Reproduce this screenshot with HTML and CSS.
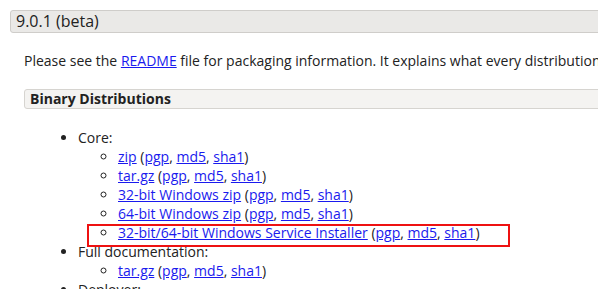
FILE: index.html
```html
<!DOCTYPE html>
<html lang="en">
<head>
  <meta charset="UTF-8" />
  <title>Apache Tomcat 9 Downloads</title>
  <link rel="stylesheet" href="styles.css">
</head>
<body>
  <div class="section">
    <h3 class="section-title">9.0.1 (beta)</h3>
    <div class="section-body">
      <p>Please see the <a href="#">README</a> file for packaging information. It explains what every distribution contains.</p>

      <h4 class="sub-title">Binary Distributions</h4>
      <ul class="dist-list">
        <li>Core:
          <ul>
            <li><a href="#">zip</a> (<a href="#">pgp</a>, <a href="#">md5</a>, <a href="#">sha1</a>)</li>
            <li><a href="#">tar.gz</a> (<a href="#">pgp</a>, <a href="#">md5</a>, <a href="#">sha1</a>)</li>
            <li><a href="#">32-bit Windows zip</a> (<a href="#">pgp</a>, <a href="#">md5</a>, <a href="#">sha1</a>)</li>
            <li><a href="#">64-bit Windows zip</a> (<a href="#">pgp</a>, <a href="#">md5</a>, <a href="#">sha1</a>)</li>
            <li class="marked"><a href="#">32-bit/64-bit Windows Service Installer</a> (<a href="#">pgp</a>, <a href="#">md5</a>, <a href="#">sha1</a>)<span class="highlight"></span></li>
          </ul>
        </li>
        <li>Full documentation:
          <ul>
            <li><a href="#">tar.gz</a> (<a href="#">pgp</a>, <a href="#">md5</a>, <a href="#">sha1</a>)</li>
          </ul>
        </li>
        <li>Deployer:
          <ul>
            <li><a href="#">zip</a> (<a href="#">pgp</a>, <a href="#">md5</a>, <a href="#">sha1</a>)</li>
          </ul>
        </li>
      </ul>
    </div>
  </div>
</body>
</html>
```

FILE: styles.css
```css
* {
  box-sizing: border-box;
}

body, html {
  margin: 0;
  overflow: hidden;
  font-family: "Open Sans", "DejaVu Sans", sans-serif;
  font-size: 14px;
  color: #222;
  background-color: white;
}

a {
  color: #1a1aee;
}

.section {
  width: 900px;
  padding: 10px 0 0 10px;
}

.section-title {
  margin: 0;
  padding: 1px 5px;
  font-size: 16px;
  font-weight: normal;
  line-height: 19px;
  background-color: #eae9e7;
  border: 1px solid #cfcdca;
  border-radius: 3px;
}

.section-body {
  padding-left: 14px;
}

.section-body p {
  margin: 18px 0 19px;
  line-height: 19px;
  white-space: nowrap;
}

.sub-title {
  margin: 0;
  padding: 0 5px;
  font-size: 14px;
  line-height: 18px;
  background-color: #f4f3f1;
  border: 1px solid #d6d4d0;
  border-radius: 3px;
}

.dist-list {
  margin: 19px 0 0;
  padding-left: 54px;
  line-height: 19px;
}

.dist-list ul {
  margin: 0;
  padding-left: 40px;
  list-style-type: circle;
}

.marked {
  position: relative;
}

.highlight {
  position: absolute;
  left: -31px;
  top: 1px;
  width: 423px;
  height: 23px;
  border: 2px solid #ee1111;
}
```
